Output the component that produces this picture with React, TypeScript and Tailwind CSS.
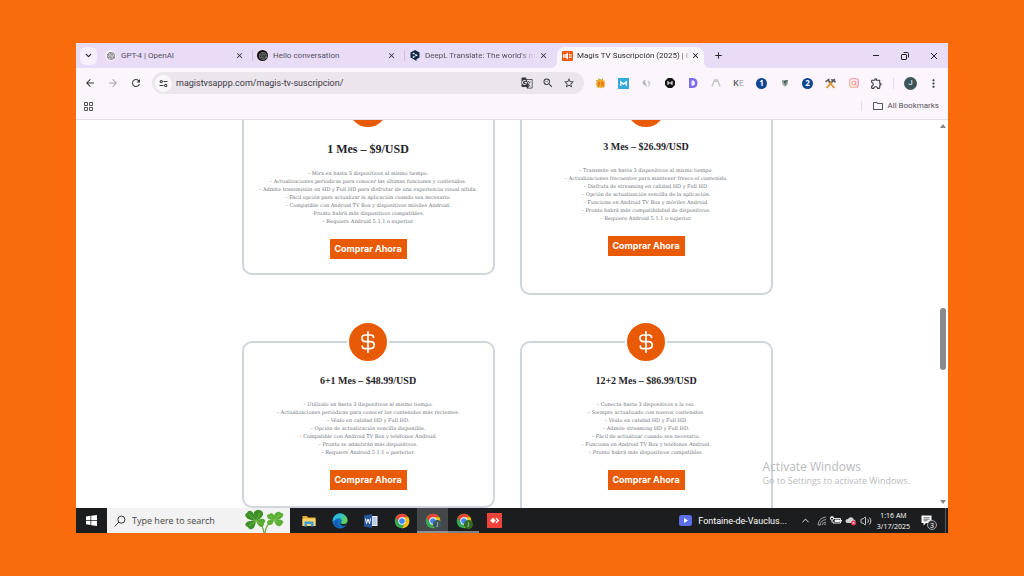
import type { ReactNode } from "react";
import {
  MdAdd,
  MdArrowBack,
  MdArrowForward,
  MdClose,
  MdGTranslate,
  MdMoreVert,
  MdOutlineExtension,
  MdOutlineFolder,
  MdRefresh,
  MdStarBorder,
  MdZoomOut,
} from "react-icons/md";
import { SiOpenai } from "react-icons/si";
import { ChevronDown, ChevronUp, Volume2 } from "lucide-react";

/* ---------- Browser tabs ---------- */

function DeepLIcon() {
  return (
    <svg viewBox="0 0 20 22" className="h-[11px] w-[10px]" aria-hidden="true">
      <path d="M10 0 19 5v10l-6 3.500v3.500l-4-2.500L1 15V5z" fill="#0f2b46" />
      <path d="M7 7l6 3.500L7 14" stroke="#fff" strokeWidth="1.300" fill="none" />
      <circle cx="7" cy="7" r="1.700" fill="#fff" />
      <circle cx="13" cy="10.500" r="1.700" fill="#fff" />
      <circle cx="7" cy="14" r="1.700" fill="#fff" />
    </svg>
  );
}

function MagisIcon() {
  return (
    <svg viewBox="0 0 22 20" className="h-[10px] w-[11px]" aria-hidden="true">
      <rect width="22" height="20" rx="2" fill="#ee5a12" />
      <path d="M2 7h5l5-4v14l-5-4H2z" fill="#fff" />
      <path d="M5 8.500 9 10 5 11.500z" fill="#ee5a12" />
      <path d="M14 6h5v8h-5z" fill="#ffd9c2" />
      <path d="M15 10h3" stroke="#ee5a12" strokeWidth="2" />
    </svg>
  );
}

const tabs: { title: string; icon: ReactNode; fade?: boolean }[] = [
  {
    title: "GPT-4 | OpenAI",
    icon: (
      <span className="flex size-[11px] items-center justify-center rounded-full bg-[#f4f0f6]">
        <SiOpenai className="size-[8px] text-[#444]" />
      </span>
    ),
  },
  {
    title: "Hello conversation",
    icon: (
      <span className="flex size-[11px] items-center justify-center rounded-full bg-[#111]">
        <SiOpenai className="size-[8px] text-[#aaa]" />
      </span>
    ),
  },
  { title: "DeepL Translate: The world's m", icon: <DeepLIcon />, fade: true },
];

function TabStrip() {
  return (
    <div className="flex h-[25px] shrink-0 items-center bg-[#e9dcf7] pl-1 font-['Roboto',sans-serif]">
      <button aria-label="Search tabs" className="flex h-[18px] w-[17px] items-center justify-center rounded-md bg-[#f7effc] text-[#222]">
        <ChevronDown className="size-[9px]" strokeWidth={3} />
      </button>
      <div className="ml-1 flex min-w-0 flex-1 items-center">
        {tabs.map((t, i) => (
          <div key={t.title} className="flex h-[25px] w-[152px] shrink items-center">
            <button className="flex min-w-0 flex-1 items-center gap-[5px] pl-[4px] text-left">
              <span className="flex w-[11px] shrink-0 justify-center">{t.icon}</span>
              <span
                className={
                  "whitespace-nowrap text-[8px] leading-3 text-[#54505c] " +
                  (t.fade ? "[mask-image:linear-gradient(to_right,#000_85%,transparent)]" : "")
                }
              >
                {t.title}
              </span>
            </button>
            <button aria-label={"Close " + t.title} className="mr-[8px] flex size-[10px] shrink-0 items-center justify-center text-[#333]">
              <MdClose className="size-[9px]" />
            </button>
            <span className={i < 2 ? "h-[11px] w-px bg-[#cfc0e4]" : "h-[11px] w-px"} />
          </div>
        ))}
        <div className="relative mt-[4px] flex h-[21px] w-[147px] shrink items-center rounded-t-lg bg-[#fdf5fd] pb-[4px]">
          <svg viewBox="0 0 6 6" className="absolute -left-[6px] bottom-0 size-[6px]" aria-hidden="true">
            <path d="M6 0v6H0a6 6 0 0 0 6-6z" fill="#fdf5fd" />
          </svg>
          <svg viewBox="0 0 6 6" className="absolute -right-[6px] bottom-0 size-[6px]" aria-hidden="true">
            <path d="M0 0v6h6a6 6 0 0 1-6-6z" fill="#fdf5fd" />
          </svg>
          <button className="flex min-w-0 flex-1 items-center gap-[4px] pl-[5px] text-left">
            <span className="flex w-[11px] shrink-0 justify-center"><MagisIcon /></span>
            <span className="whitespace-nowrap text-[8px] leading-3 text-[#2d2a33] [mask-image:linear-gradient(to_right,#000_92%,transparent)]">
              Magis TV Suscripción (2025) | E
            </span>
          </button>
          <button aria-label="Close Magis TV Suscripción" className="mr-[4px] flex size-[10px] shrink-0 items-center justify-center text-[#111]">
            <MdClose className="size-[9px]" />
          </button>
        </div>
        <button aria-label="New tab" className="ml-[8px] flex size-[12px] shrink-0 items-center justify-center text-[#222]">
          <MdAdd className="size-[11px]" />
        </button>
      </div>
      <div className="flex shrink-0 items-center text-[#222]">
        <button aria-label="Minimize" className="flex h-[25px] w-[29px] items-center justify-center">
          <svg viewBox="0 0 8 8" className="size-[8px]" aria-hidden="true"><path d="M1 3.500h6" stroke="currentColor" /></svg>
        </button>
        <button aria-label="Restore" className="flex h-[25px] w-[29px] items-center justify-center">
          <svg viewBox="0 0 8 8" className="size-[8px]" fill="none" stroke="currentColor" strokeWidth="1" aria-hidden="true">
            <rect x="0.500" y="2.500" width="5" height="5" rx="0.500" />
            <path d="M2.500 0.500h4q1 0 1 1v4" />
          </svg>
        </button>
        <button aria-label="Close window" className="flex h-[25px] w-[29px] items-center justify-center">
          <svg viewBox="0 0 8 8" className="size-[8px]" aria-hidden="true"><path d="M1 1l6 6M7 1 1 7" stroke="currentColor" /></svg>
        </button>
      </div>
    </div>
  );
}

/* ---------- Toolbar ---------- */

const extensions: { name: string; icon: ReactNode }[] = [
  {
    name: "SEO helper",
    icon: (
      <svg viewBox="0 0 20 20" className="size-[11px]" aria-hidden="true">
        <path d="M10 1l1.500 3L14 1l.5 3.500L18 4l-1.500 3L19 9l-2 2 2 3-3 .5.5 3.500-3.500-1L11 19l-2-2-3 2-.5-3.500L2 16l1-3.500L1 10l2.500-2L2 4l3.500.5L6 1l2.500 2z" fill="#f2a81f" />
        <path d="M7 1l1 2M14 1l-1 2M3 4l2 2M17 16l-2-1M5 17l1-2" stroke="#5ca032" strokeWidth="1.800" />
        <path d="M5 8h3v5H5M5 10.500h3M12 8h3v5h-3z" stroke="#dd5a20" strokeWidth="1.300" fill="none" />
      </svg>
    ),
  },
  {
    name: "Mail",
    icon: (
      <svg viewBox="0 0 20 20" className="size-[11px]" aria-hidden="true">
        <rect width="20" height="20" fill="#33a9dc" />
        <path d="M5 14V7l5 4 5-4v7" stroke="#fff" strokeWidth="2.500" fill="none" />
      </svg>
    ),
  },
  {
    name: "Link tool",
    icon: (
      <svg viewBox="0 0 20 20" className="size-[9px]" fill="#b8b4be" aria-hidden="true">
        <path d="M8 2Q1 3 1 9q1 4 5 5l4 4q1-4-1-6-4-5-1-10z" />
        <path d="M13 3q6 2 6 7t-7 8q4-5 2-8t-1-7z" fill="#d4d0d8" />
      </svg>
    ),
  },
  {
    name: "H tool",
    icon: (
      <svg viewBox="0 0 20 20" className="size-[10px]" aria-hidden="true">
        <path d="M6 0h8l6 6v8l-6 6H6l-6-6V6z" fill="#161616" />
        <path d="M6 6v8M14 6v8M6 10h8" stroke="#fff" strokeWidth="2" />
      </svg>
    ),
  },
  {
    name: "D tool",
    icon: (
      <svg viewBox="0 0 20 20" className="size-[10px]" aria-hidden="true">
        <path d="M2 0h8q9 1 9 10t-9 10H2z" fill="#7c6cf0" />
        <path d="M7 5h4q3 1 3 5t-3 5H7z" fill="#f7f2ff" />
      </svg>
    ),
  },
  {
    name: "Moz",
    icon: (
      <svg viewBox="0 0 20 20" className="size-[10px]" fill="none" stroke="#c9c5cb" strokeWidth="3" aria-hidden="true">
        <path d="M2 17 7 4h2v4M11 8V4h2l5 13" />
      </svg>
    ),
  },
  {
    name: "Keywords",
    icon: (
      <span className="text-[9px] font-semibold leading-3 text-[#555]">
        K<span className="text-[#b5b1b8]">E</span>
      </span>
    ),
  },
  {
    name: "Counter one",
    icon: <span className="flex size-[11px] items-center justify-center rounded-full bg-[#0f4591] text-[8px] font-bold leading-none text-white">1</span>,
  },
  {
    name: "Shield",
    icon: (
      <svg viewBox="0 0 16 16" className="size-[8px]" aria-hidden="true">
        <path d="M2 2h12v5q0 5-6 8-6-3-6-8z" fill="#9caaa8" />
        <path d="M8 2h6l-3 6-3 7z" fill="#5e7770" />
        <path d="M5 4h3v7z" fill="#3f4e4c" />
      </svg>
    ),
  },
  {
    name: "Counter two",
    icon: <span className="flex size-[11px] items-center justify-center rounded-full bg-[#0f4591] text-[8px] font-bold leading-none text-white">2</span>,
  },
  {
    name: "Tools",
    icon: (
      <svg viewBox="0 0 20 20" className="size-[11px]" fill="none" aria-hidden="true">
        <path d="M3 18 13 7M17 18 7 7" stroke="#dd9a33" strokeWidth="3.500" />
        <path d="M1 7l7-5M4 3l6 5M11 3q6 0 8 5M12 8l6-6" stroke="#5c5a60" strokeWidth="2.800" />
      </svg>
    ),
  },
  {
    name: "Photo",
    icon: (
      <svg viewBox="0 0 20 20" className="size-[10px]" fill="none" aria-hidden="true">
        <defs>
          <linearGradient id="ig" x1="0" y1="1" x2="1" y2="0">
            <stop offset="0" stopColor="#f6b27a" />
            <stop offset="1" stopColor="#ec7fa6" />
          </linearGradient>
        </defs>
        <rect x="1.500" y="1.500" width="17" height="17" rx="4" stroke="url(#ig)" strokeWidth="2.200" />
        <circle cx="10" cy="10" r="4" stroke="url(#ig)" strokeWidth="2.200" />
        <path d="M11 11l4 4" stroke="#ef8a9d" strokeWidth="2" />
      </svg>
    ),
  },
  { name: "Extensions", icon: <MdOutlineExtension className="size-[13px] text-[#3b3840]" /> },
];

function Toolbar() {
  return (
    <div className="flex h-[30px] shrink-0 items-center bg-[#fdf5fd] text-[#3b3840]">
      <div className="flex w-[76px] shrink-0 items-center gap-[11px] pl-[8px]">
        <button aria-label="Back"><MdArrowBack className="size-[12px]" /></button>
        <button aria-label="Forward" className="text-[#aaa4ae]"><MdArrowForward className="size-[12px]" /></button>
        <button aria-label="Reload"><MdRefresh className="size-[12px]" /></button>
      </div>
      <div className="flex h-[22px] min-w-0 flex-1 items-center rounded-full bg-[#ece5ee] pl-[3px] pr-[9px]">
        <button aria-label="Site information" className="flex size-[17px] shrink-0 items-center justify-center rounded-full bg-[#fbf6fc]">
          <svg viewBox="0 0 16 16" className="size-[9px]" fill="none" stroke="currentColor" strokeWidth="1.800" aria-hidden="true">
            <circle cx="4" cy="4.500" r="2" />
            <path d="M8 4.500h7M1 11.500h7" />
            <circle cx="12" cy="11.500" r="2" />
          </svg>
        </button>
        <input
          aria-label="Address"
          defaultValue="magistvsappp.com/magis-tv-suscripcion/"
          className="ml-[4px] min-w-0 flex-1 bg-transparent font-['Roboto',sans-serif] text-[9px] leading-3 text-[#3b3840] outline-none"
        />
        <div className="flex shrink-0 items-center gap-[9px]">
          <button aria-label="Translate"><MdGTranslate className="size-[12px]" /></button>
          <button aria-label="Zoom"><MdZoomOut className="size-[12px]" /></button>
          <button aria-label="Bookmark"><MdStarBorder className="size-[12px]" /></button>
        </div>
      </div>
      <div className="ml-[5px] flex shrink-0 items-center">
        {extensions.map((e) => (
          <button key={e.name} aria-label={e.name} className="flex h-4 w-[23px] items-center justify-center">
            {e.icon}
          </button>
        ))}
      </div>
      <span className="ml-[5px] h-[11px] w-px bg-[#e6d8ee]" />
      <button aria-label="Profile" className="ml-[10px] flex size-[13px] shrink-0 items-center justify-center rounded-full bg-[#3c5558] font-['Roboto',sans-serif] text-[8px] leading-none text-white">
        J
      </button>
      <button aria-label="Menu" className="ml-[10px] mr-[8px]"><MdMoreVert className="size-[13px]" /></button>
    </div>
  );
}

function BookmarksBar() {
  return (
    <div className="flex h-[22px] shrink-0 items-center border-b border-[#e5dde8] bg-[#fdf5fd] pb-[5px] pl-[8px] pr-[9px] text-[#55515a]">
      <button aria-label="Apps">
        <svg viewBox="0 0 18 18" className="size-[9px]" fill="none" stroke="currentColor" strokeWidth="2" aria-hidden="true">
          <path d="M1 1h6v6H1zM11 1h6v6h-6zM1 11h6v6H1zM11 11h6v6h-6z" />
        </svg>
      </button>
      <span className="ml-auto mr-[10px] h-[10px] w-px bg-[#e6d8ee]" />
      <button className="flex items-center gap-[3px] font-['Roboto',sans-serif] text-[8px] leading-3">
        <MdOutlineFolder className="size-[12px]" />
        All Bookmarks
      </button>
    </div>
  );
}

/* ---------- Page content ---------- */

type Plan = { title: string; features: string[]; large?: boolean; tall?: boolean };

const plans: Plan[] = [
  {
    title: "1 Mes – $9/USD",
    large: true,
    features: [
      "– Mira en hasta 3 dispositivos al mismo tiempo.",
      "– Actualizaciones periódicas para conocer las últimas funciones y contenidos.",
      "– Admite transmisión en HD y Full HD para disfrutar de una experiencia visual nítida.",
      "– Fácil opción para actualizar la aplicación cuando sea necesario.",
      "– Compatible con Android TV Box y dispositivos móviles Android.",
      "-Pronto habrá más dispositivos compatibles.",
      "– Requiere Android 5.1.1 o superior.",
    ],
  },
  {
    title: "3 Mes – $26.99/USD",
    tall: true,
    features: [
      "– Transmite en hasta 3 dispositivos al mismo tiempo.",
      "– Actualizaciones frecuentes para mantener fresco el contenido.",
      "– Disfruta de streaming en calidad HD y Full HD.",
      "– Opción de actualización sencilla de la aplicación.",
      "– Funciona en Android TV Box y móviles Android.",
      "– Pronto habrá más compatibilidad de dispositivos.",
      "– Requiere Android 5.1.1 o superior.",
    ],
  },
  {
    title: "6+1 Mes – $48.99/USD",
    features: [
      "– Utilízalo en hasta 3 dispositivos al mismo tiempo.",
      "– Actualizaciones periódicas para conocer los contenidos más recientes.",
      "– Véalo en calidad HD y Full HD.",
      "– Opción de actualización sencilla disponible.",
      "– Compatible con Android TV Box y teléfonos Android.",
      "– Pronto se admitirán más dispositivos.",
      "– Requiere Android 5.1.1 o posterior.",
    ],
  },
  {
    title: "12+2 Mes – $86.99/USD",
    tall: true,
    features: [
      "– Conecta hasta 3 dispositivos a la vez.",
      "– Siempre actualizado con nuevos contenidos.",
      "– Véalo en calidad HD y Full HD.",
      "– Admite streaming HD y Full HD.",
      "– Fácil de actualizar cuando sea necesario.",
      "– Funciona en Android TV Box y teléfonos Android.",
      "– Pronto habrá más dispositivos compatibles.",
    ],
  },
];

function PlanCard({ plan }: { plan: Plan }) {
  return (
    <article
      className={
        "flex flex-col items-center rounded-[10px] border-2 border-[#d0d4dc] bg-white " +
        (plan.tall ? "pb-[37px]" : plan.large ? "pb-[14px]" : "pb-[16px]")
      }
    >
      <span className="-mt-[22px] flex size-[42px] items-center justify-center rounded-full border-2 border-white bg-[#e85a04]">
        <svg viewBox="0 0 24 24" className="size-[24px]" fill="none" stroke="#fff" strokeWidth="1.700" strokeLinecap="round" aria-hidden="true">
          <path d="M12 1.800v20.400M17.500 7.500q0-2.500-2.500-2.500H9.500Q6 5 6 8.200t3.500 3.400h5q3.700 0 3.700 3.500t-3.700 3.500H9q-2.700 0-2.700-2.400" />
        </svg>
      </span>
      <h2
        className={
          "font-['Liberation_Serif',serif] font-bold text-[#1f2328] " +
          (plan.large ? "mt-[12px] text-[12px] leading-[17px]" : "mt-[11px] text-[10px] leading-[14px]")
        }
      >
        {plan.title}
      </h2>
      <ul
        className={
          "text-center font-['DejaVu_Serif',serif] text-[5px] leading-[8px] text-[#6f747c] " +
          (plan.large ? "mt-[11px]" : "mt-[12px]")
        }
      >
        {plan.features.map((f) => (
          <li key={f} className="whitespace-nowrap">{f}</li>
        ))}
      </ul>
      <a href="#comprar" className="mt-[14px] flex h-[20px] w-[77px] items-center justify-center whitespace-nowrap bg-[#e85a04] font-['Inter',sans-serif] text-[9px] font-bold leading-3 text-white">
        Comprar Ahora
      </a>
    </article>
  );
}

function PageView() {
  return (
    <div className="relative flex min-h-0 flex-1 bg-white">
      <main className="min-w-0 flex-1 overflow-hidden">
        <div className="mx-auto -mt-[13px] grid max-w-[531px] grid-cols-2 items-start gap-x-[25px] gap-y-[46px]">
          {plans.map((p) => (
            <PlanCard key={p.title} plan={p} />
          ))}
        </div>
      </main>
      <div className="flex w-[10px] shrink-0 flex-col items-center py-1" aria-hidden="true">
        <svg viewBox="0 0 6 4" className="h-[4px] w-[6px]"><path d="M0 4 3 0l3 4z" fill="#85898c" /></svg>
        <div className="grow-[178]" />
        <div className="h-[62px] w-[6px] rounded-full bg-[#878b8d]" />
        <div className="grow-[128]" />
        <svg viewBox="0 0 6 4" className="h-[4px] w-[6px]"><path d="M0 0h6L3 4z" fill="#85898c" /></svg>
      </div>
      <div className="pointer-events-none absolute bottom-[21px] right-[38px] text-[#b9bbbd]">
        <p className="text-[12px] leading-[15px]">Activate Windows</p>
        <p className="text-[9px] leading-[13px]">Go to Settings to activate Windows.</p>
      </div>
    </div>
  );
}

/* ---------- Taskbar ---------- */

function ChromeLogo() {
  return (
    <svg viewBox="0 0 48 48" className="size-[16px]" aria-hidden="true">
      <circle cx="24" cy="24" r="22" fill="#34a853" />
      <path d="M5 13A22 22 0 0 1 43 13H24a11 11 0 0 0-9.500 16.500z" fill="#ea4335" />
      <path d="M43 13a22 22 0 0 1-19 33l9.500-16.500A11 11 0 0 0 33.500 18L24 13z" fill="#fbbc05" />
      <circle cx="24" cy="24" r="11" fill="#fff" />
      <circle cx="24" cy="24" r="8.500" fill="#4285f4" />
    </svg>
  );
}

function Clover() {
  return (
    <svg viewBox="0 0 40 24" className="h-[24px] w-[40px]" aria-hidden="true">
      <path d="M11 11q7 4 8 13M29 10q-8 5-9 14" fill="none" stroke="#6aa63a" strokeWidth="1.200" />
      <g fill="#3f9127">
        <path d="M11 12Q3 11 1 8t1-4q1-3 4-2 3 1 5 10z" />
        <path d="M11 12Q7 4 10 2t4-1q3 0 4 3 1 4-7 8z" />
        <path d="M11 12q-8-1-10 2t2 4q1 3 4 2 3-1 4-8z" />
      </g>
      <path d="M11 12q6-4 9-1 1 2-1 3 0 4-3 4-3-1-5-6z" fill="#56a833" />
      <g fill="#5cb036">
        <path d="M29 11q-7 0-7-4 0-2 3-2 1-2 3 0 2 1 1 6z" />
        <path d="M29 11q-1-6 3-8 3-1 4 1 3 0 2 3-2 4-9 4z" />
        <path d="M29 11q6-2 9 1 1 2-1 3-1 3-4 2-3-1-4-6z" />
        <path d="M29 11q-6-1-7 2 0 3 3 3 3 0 4-5z" />
      </g>
      <path d="M4 5l7 7-7 5M15 4l-4 8 6 3M25 7l4 4 6-5M34 14l-5-3" stroke="#8fcf5a" strokeWidth="0.500" fill="none" />
    </svg>
  );
}

const apps: { name: string; icon: ReactNode; badge?: string; state?: "active" | "open" }[] = [
  {
    name: "File Explorer",
    icon: (
      <svg viewBox="0 0 28 24" className="h-[12px] w-[14px]" aria-hidden="true">
        <path d="M1 2h9l2 3h15v17H1z" fill="#e8a92e" />
        <path d="M1 7h26v15H1z" fill="#fbd566" />
        <path d="M5 13h18v10h-5v-5h-8v5H5z" fill="#3f9ad8" />
      </svg>
    ),
  },
  {
    name: "Edge",
    icon: (
      <svg viewBox="0 0 32 32" className="size-[16px]" aria-hidden="true">
        <defs>
          <linearGradient id="edge" x1="0" y1="0" x2="1" y2="0.600">
            <stop offset="0" stopColor="#2aa9e0" />
            <stop offset="0.500" stopColor="#2fc2c8" />
            <stop offset="1" stopColor="#69d24c" />
          </linearGradient>
        </defs>
        <circle cx="16" cy="16" r="15" fill="#1170c4" />
        <path d="M1 16A15 15 0 0 1 31 15q0 7-8 7-6 0-5-3 3-2 1-6-3-4-9-2-7 2-9 7z" fill="url(#edge)" />
        <path d="M18 19q-1 3 5 3 5 0 7-3-1 4-3 6-5 2-9-1-3-2 0-5z" fill="#1c1d1e" />
        <path d="M12 15q-3 8 3 12l-3 3Q4 26 6 18q2-4 6-3z" fill="#1659a8" />
      </svg>
    ),
  },
  {
    name: "Word",
    icon: (
      <svg viewBox="0 0 28 28" className="size-[14px]" aria-hidden="true">
        <path d="M14 4h13v20H14z" fill="#e9eff8" />
        <path d="M17 8h8M17 12h8M17 16h8M17 20h8" stroke="#6c93c9" strokeWidth="1.500" />
        <path d="M0 3 16 0v28L0 25z" fill="#2a5699" />
        <path d="M3 9l2 10 3-9 3 9 2-10" stroke="#fff" strokeWidth="2" fill="none" />
      </svg>
    ),
  },
  { name: "Chrome", icon: <ChromeLogo /> },
  { name: "Chrome profile one", icon: <ChromeLogo />, badge: "bg-[#3c5558]", state: "active" },
  { name: "Chrome profile two", icon: <ChromeLogo />, badge: "bg-[#33691e]", state: "open" },
  {
    name: "AnyDesk",
    icon: (
      <svg viewBox="0 0 30 30" className="size-[15px]" aria-hidden="true">
        <rect width="30" height="30" fill="#ef443b" />
        <path d="M12 9.500l5.500 5.500-5.500 5.500L6.500 15z" fill="#fff" />
        <path d="M17 10.500l2-1L24.500 15 19 20.500l-2-1 3.500-4.500z" fill="#fff" />
      </svg>
    ),
  },
];

function Taskbar() {
  return (
    <footer className="flex h-[25px] shrink-0 items-stretch bg-[#1c1d1e] text-white">
      <button aria-label="Start" className="flex w-[31px] items-center justify-center">
        <svg viewBox="0 0 22 22" className="size-[11px]" fill="#fff" aria-hidden="true">
          <path d="M0 3l9-1.300V10H0zM10.500 1.500 22 0v10H10.500zM0 11.500h9v8.300L0 18.500zM10.500 11.500H22V22l-11.500-1.600z" />
        </svg>
      </button>
      <label className="flex w-[183px] shrink items-center bg-[#f2f2f2] pl-[7px] pr-[5px] text-[#333]">
        <svg viewBox="0 0 22 22" className="size-[12px] shrink-0" fill="none" stroke="#333" strokeWidth="1.800" aria-hidden="true">
          <circle cx="13.500" cy="8.500" r="6.500" />
          <path d="M9 13l-8 8" />
        </svg>
        <input
          aria-label="Search"
          placeholder="Type here to search"
          className="ml-[6px] min-w-0 flex-1 bg-transparent text-[9px] leading-3 outline-none placeholder:text-[#444]"
        />
        <Clover />
      </label>
      <nav className="ml-[3px] flex">
        {apps.map((a) => (
          <button
            key={a.name}
            aria-label={a.name}
            className={
              "relative flex w-[31px] items-center justify-center border-b-2 pt-[2px] " +
              (a.state === "active"
                ? "border-[#8d9194] bg-[#45484a]"
                : a.state === "open"
                  ? "border-[#7d8286]"
                  : "border-transparent")
            }
          >
            {a.icon}
            {a.badge && (
              <span className={"absolute bottom-[2px] right-[6px] flex size-[9px] items-center justify-center rounded-full text-[5px] leading-none text-white " + a.badge}>
                J
              </span>
            )}
          </button>
        ))}
      </nav>
      <div className="ml-auto flex items-center">
        <button className="flex items-center gap-[6px] font-['Roboto',sans-serif] text-[9px] leading-3">
          <svg viewBox="0 0 26 22" className="h-[11px] w-[13px]" aria-hidden="true">
            <rect width="26" height="22" rx="5" fill="#5b6ee8" />
            <path d="M10 6l8 5-8 5z" fill="#fff" />
          </svg>
          Fontaine-de-Vauclus...
        </button>
        <button aria-label="Show hidden icons" className="ml-[13px]"><ChevronUp className="size-[11px]" /></button>
        <button aria-label="Network" className="ml-[6px]">
          <svg viewBox="0 0 20 20" className="size-[10px]" fill="none" stroke="#c8c8c8" strokeWidth="1.500" aria-hidden="true">
            <path d="M2 18Q3 4 18 2M6 18Q7 9 18 7M10 18q1-5 8-6M14 18q0-2 4-2M2 18h5" />
          </svg>
        </button>
        <button aria-label="Battery" className="ml-[3px]">
          <svg viewBox="0 0 24 18" className="h-[9px] w-[12px]" fill="none" stroke="#fff" strokeWidth="1.800" aria-hidden="true">
            <path d="M8 5h13v9H6v-3M23 8v3" />
            <path d="M10 8h9v3h-9z" fill="#fff" />
            <path d="M1 3v3q0 2 3 2t3-2V3zM2.500 0v3M5.500 0v3M4 8v5" />
          </svg>
        </button>
        <button aria-label="Cloud storage" className="ml-[3px]">
          <svg viewBox="0 0 24 20" className="h-[10px] w-[12px]" aria-hidden="true">
            <path d="M5 14q-4 0-4-4t5-4q3-5 8-3 3 1 3 4 4 0 4 4t-4 3z" fill="#cfd3d6" />
            <circle cx="17" cy="14" r="5" fill="#e0344a" />
            <path d="M15 12l4 4M19 12l-4 4" stroke="#fff" strokeWidth="1.300" />
          </svg>
        </button>
        <button aria-label="Volume" className="ml-[3px]"><Volume2 className="size-[12px]" strokeWidth={1.5} /></button>
        <time className="ml-[5px] text-center text-[7px] leading-[11px]">
          1:16 AM
          <br />
          3/17/2025
        </time>
        <button aria-label="Notifications" className="relative ml-[11px] mr-[13px]">
          <svg viewBox="0 0 22 22" className="size-[11px]" aria-hidden="true">
            <path d="M1 1h20v15H10l-5 5v-5H1z" fill="#fff" />
            <path d="M5 5.500h12M5 8.500h12M5 11.500h8" stroke="#1c1d1e" strokeWidth="1.200" />
          </svg>
          <span className="absolute -bottom-[4px] -right-[5px] flex size-[10px] items-center justify-center rounded-full border border-[#a0a0a0] bg-[#2b2c2d] text-[7px] leading-none">3</span>
        </button>
        <span className="mr-[2px] h-[25px] w-px bg-[#5a5b5c]" />
      </div>
    </footer>
  );
}

export default function App() {
  return (
    <div className="flex h-screen flex-col bg-[#fa6c0b] px-[76px] py-[43px] font-['Open_Sans','Noto_Sans',sans-serif]">
      <div className="flex min-h-0 flex-1 flex-col overflow-hidden bg-white">
        <TabStrip />
        <Toolbar />
        <BookmarksBar />
        <PageView />
        <Taskbar />
      </div>
    </div>
  );
}
